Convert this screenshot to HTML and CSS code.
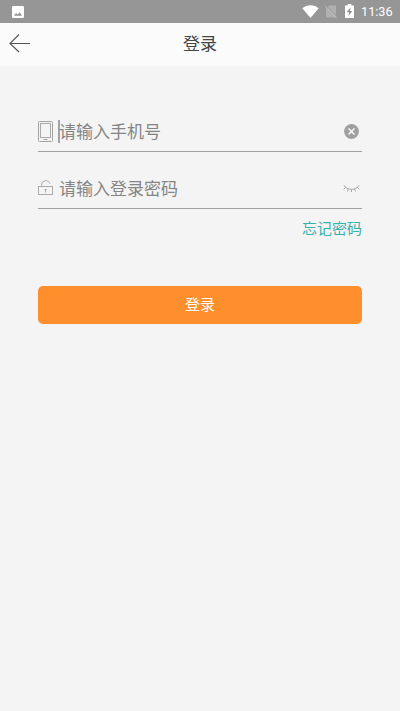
FILE: index.html
```html
<!DOCTYPE html>
<html lang="zh-CN">
<head>
<meta charset="utf-8">
<title>登录</title>
<link rel="stylesheet" href="styles.css">
</head>
<body>
<div class="status">
  <svg class="picture" width="12" height="12" viewBox="0 0 12 12"><rect width="12" height="12" rx="1.3" fill="#fff"/><path d="M2 9.800L4 7l1.600 1.600L7.600 6.200l2.500 3.600z" fill="#969696"/></svg>
  <svg class="wifi" width="17" height="13" viewBox="0 0 17 13"><path d="M.3 3.200C5-.9 12-.9 16.700 3.200L8.500 13z" fill="#fff"/></svg>
  <svg class="sim" width="12" height="13" viewBox="0 0 12 13"><path d="M4.200.5H11V12.500H1V3.700z" fill="#b0b0b0"/><path d="M1 .600L11.800 11.400" stroke="#969696"/><path d="M.2 1.200L11.500 12.500" stroke="#bebebe"/></svg>
  <svg class="battery" width="9" height="14" viewBox="0 0 9 14"><path d="M2.700 0h3.600v1.500H9V14H0V1.500h2.700z" fill="#fff"/><path d="M5.600 3.300L1.800 8.300h2.300L3.500 12 7.200 7H5z" fill="#8c8c8c"/></svg>
  <span class="time">11:36</span>
</div>
<header class="header">
  <svg class="back" width="22" height="20" viewBox="0 0 22 20"><path d="M1 10.500H21M10 1.500L1 10.500l9 8.500" fill="none" stroke="#555" stroke-width="1.100"/></svg>
  <h1 class="title">登录</h1>
</header>
<main class="form">
  <div class="field first">
    <svg class="lead" width="15" height="21" viewBox="0 0 15 21"><g fill="none" stroke="#a4a4a4"><rect x=".5" y=".5" width="14" height="20" rx="1"/><rect x="2.500" y="2.500" width="10" height="14" stroke="#aaa"/><path d="M5.500 18.500h4"/></g></svg>
    <span class="caret"></span>
    <span class="hint">请输入手机号</span>
    <svg class="clear" width="15" height="15" viewBox="0 0 15 15"><circle cx="7.500" cy="7.500" r="7.400" fill="#a0a0a0"/><path d="M4.500 4.500l6 6m0-6l-6 6" stroke="#f8f8f8" stroke-width="1.500"/></svg>
  </div>
  <div class="field">
    <svg class="lead lock" width="15" height="16" viewBox="0 0 15 16"><g fill="none" stroke="#acacac"><rect x=".5" y="6.500" width="14" height="8"/><path d="M3.500 6.500V5.200a4.300 4.300 0 0 1 8.400-1.500M7.500 9v3.500M6.500 9.500h2"/></g></svg>
    <span class="caret off"></span>
    <span class="hint">请输入登录密码</span>
    <svg class="eye" width="17" height="9" viewBox="0 0 17 9"><path d="M1 1.300c3.200 5.400 11.800 5.400 15 0M2.600 3.500L.7 5.200M5.300 5.200L4.300 7.500M8.500 5.500V8M11.700 5.200l1 2.300M14.400 3.500l1.900 1.700" fill="none" stroke="#a6a6a6"/></svg>
  </div>
  <a class="forgot">忘记密码</a>
  <button class="submit">登录</button>
</main>
</body>
</html>
```
FILE: styles.css
```css
* { box-sizing: border-box; }
body {
  margin: 0;
  height: 711px;
  background: #f4f4f4;
  font-family: "Noto Sans CJK SC", sans-serif;
}
svg { display: block; flex: none; }
.status {
  display: flex;
  align-items: center;
  height: 23px;
  padding: 0 8px 0 12px;
  background: #969696;
}
.wifi { margin-left: auto; }
.sim { margin-left: 6px; }
.battery { margin: -1px 0 0 8px; }
.time {
  width: 31px;
  margin-left: 7px;
  color: #fff;
  font: 400 12.7px/23px Roboto, sans-serif;
  white-space: nowrap;
}
.header {
  display: grid;
  grid-template-columns: 40px 1fr 40px;
  align-items: center;
  height: 43px;
  background: #fbfbfb;
}
.back { margin-left: 9px; margin-top: -3px; }
.title {
  margin: 0;
  padding-bottom: 3px;
  color: #444;
  font-size: 17px;
  font-weight: 400;
  line-height: 24px;
  text-align: center;
}
.form {
  display: flex;
  flex-direction: column;
  padding: 46px 38px 0;
}
.field {
  display: flex;
  align-items: center;
  height: 57px;
  padding-top: 17px;
  border-bottom: 1px solid #a0a0a0;
}
.field.first { height: 40px; padding-top: 0; }
.lock { margin-top: -1px; }
.caret {
  width: 2px;
  height: 23px;
  margin-left: 5px;
  background: #a3a3a3;
}
.caret.off { background: transparent; }
.hint {
  flex: 1;
  margin-left: -1px;
  padding-bottom: 2px;
  color: #858585;
  font-size: 17px;
  line-height: 25px;
  white-space: nowrap;
}
.clear { margin-right: 3px; }
.eye { margin-right: 2px; }
.forgot {
  align-self: flex-end;
  margin-top: 8px;
  color: #37b1ac;
  font-size: 15px;
  line-height: 22px;
}
.submit {
  height: 38px;
  margin-top: 47px;
  padding: 0 0 3px;
  border: 0;
  border-radius: 5px;
  background: #ff8f2d;
  color: #fff;
  font: 15px/22px "Noto Sans CJK SC", sans-serif;
}
```
